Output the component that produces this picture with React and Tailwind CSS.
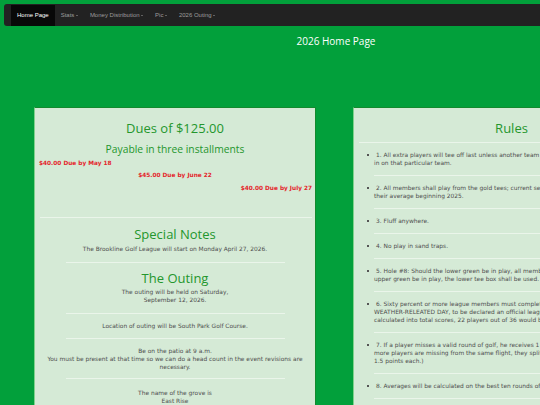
import React from "react";

const heading = { fontFamily: '"Comic Sans MS", "Open Sans", sans-serif' };
const body = { fontFamily: '"DejaVu Sans", Verdana, sans-serif' };

const navItems = [
  { label: "Home Page", active: true },
  { label: "Stats", caret: true },
  { label: "Money Distribution", caret: true },
  { label: "Pic", caret: true },
  { label: "2026 Outing", caret: true },
];

const rules = [
  [
    "1. All extra players will tee off last unless another team member is absent, then they will fill",
    "in on that particular team.",
  ],
  [
    "2. All members shall play from the gold tees; current seniors may play from the silver tees with",
    "their average beginning 2025.",
  ],
  ["3. Fluff anywhere."],
  ["4. No play in sand traps."],
  [
    "5. Hole #8: Should the lower green be in play, all members will tee off from the upper tee box. Should the",
    "upper green be in play, the lower tee box shall be used.",
  ],
  [
    "6. Sixty percent or more league members must complete their round on a",
    "WEATHER-RELEATED DAY, to be declared an official league round. (Example: to be",
    "calculated into total scores, 22 players out of 36 would be since 60%.)",
  ],
  [
    "7. If a player misses a valid round of golf, he receives 1 point. (If two or",
    "more players are missing from the same flight, they split points, e.g. 3 points,",
    "1.5 points each.)",
  ],
  ["8. Averages will be calculated on the best ten rounds of your season."],
];

function Line({ children, className = "" }) {
  return <div className={`h-[8px] leading-[8px] whitespace-nowrap ${className}`}>{children}</div>;
}

function Divider({ className = "" }) {
  return <div className={`h-px bg-[#eaf5ea] ${className}`} />;
}

export default function App() {
  return (
    <div className="w-[540px] h-[405px] overflow-hidden bg-[#02a03b]">
      <div className="w-[672px]">
        {/* navbar */}
        <div
          className="ml-[4px] mt-[4px] w-[664px] h-[22px] bg-[#222222] rounded-[3px] flex pl-[7px]"
          style={{ fontFamily: '"Liberation Sans", Arial, sans-serif' }}
        >
          {navItems.map((item) => (
            <div
              key={item.label}
              className={`flex items-center px-[6px] text-[6px] ${
                item.active ? "bg-[#080808] text-white mt-px" : "text-[#9d9d9d]"
              }`}
            >
              {item.label}
              {item.caret && (
                <span className="ml-[1.5px] w-0 h-0 border-l-[1.5px] border-r-[1.5px] border-t-[1.5px] border-l-transparent border-r-transparent border-t-[#9d9d9d]" />
              )}
            </div>
          ))}
        </div>

        <div className="mt-[8px] h-[14px] leading-[14px] text-center text-white text-[10px]" style={heading}>
          2026 Home Page
        </div>

        <div className="mt-[59px] flex pl-[34px] gap-[37px] items-start">
          {/* left card */}
          <div
            className="w-[282px] h-[320px] bg-[#d5ead6] border-t border-r border-t-[#138a2e] border-r-[#138a2e] border-l border-l-[#7fd18c] text-[#4e4e4e]"
            style={body}
          >
            <div className="mt-[11px] h-[18px] leading-[18px] text-center text-[13px] text-[#24962d]" style={heading}>
              Dues of $125.00
            </div>
            <div className="mt-[5px] h-[14px] leading-[14px] text-center text-[10.3px] text-[#24962d]" style={heading}>
              Payable in three installments
            </div>
            <Line className="mt-[3px] pl-[4px] text-[5.8px] font-bold text-[#e4252b]">$40.00 Due by May 18</Line>
            <Line className="mt-[4px] text-center text-[5.8px] font-bold text-[#e4252b]">$45.00 Due by June 22</Line>
            <Line className="mt-[5px] pr-[3px] text-right text-[5.8px] font-bold text-[#e4252b]">$40.00 Due by July 27</Line>

            <Divider className="mt-[25px] ml-[5px] mr-[3px]" />

            <div className="mt-[7px] h-[18px] leading-[18px] text-center text-[13px] text-[#24962d]" style={heading}>
              Special Notes
            </div>
            <Line className="mt-[2px] text-center text-[5.9px]">
              The Brookline Golf League will start on Monday April 27, 2026.
            </Line>

            <Divider className="mt-[9px] ml-[31px] mr-[30px]" />

            <div className="mt-[6px] h-[18px] leading-[18px] text-center text-[13px] text-[#24962d]" style={heading}>
              The Outing
            </div>
            <div className="mt-px text-center text-[5.9px]">
              <Line>The outing will be held on Saturday,</Line>
              <Line>September 12, 2026.</Line>
            </div>

            <Divider className="mt-[9px] ml-[31px] mr-[30px]" />

            <Line className="mt-[8px] text-center text-[5.9px]">Location of outing will be South Park Golf Course.</Line>

            <Divider className="mt-[8px] ml-[31px] mr-[30px]" />

            <div className="mt-[8px] text-center text-[5.9px]">
              <Line>Be on the patio at 9 a.m.</Line>
              <Line>You must be present at that time so we can do a head count in the event revisions are</Line>
              <Line>necessary.</Line>
            </div>

            <Divider className="mt-[7px] ml-[31px] mr-[30px]" />

            <div className="mt-[10px] text-center text-[5.9px]">
              <Line>The name of the grove is</Line>
              <Line>East Rise</Line>
            </div>
          </div>

          {/* right card */}
          <div
            className="w-[316px] h-[320px] bg-[#d5ead6] border-t border-t-[#138a2e] border-l border-l-[#7fd18c] text-[#4e4e4e] overflow-hidden"
            style={body}
          >
            <div className="mt-[11px] h-[18px] leading-[18px] text-center text-[13px] text-[#24962d]" style={heading}>
              Rules
            </div>
            <Divider className="mt-[5px] ml-[5px]" />
            <ul className="ml-[20px] text-[5.9px]">
              {rules.map((lines, i) => (
                <li key={i} className="relative pt-[8px]">
                  <span className="absolute left-[-7px] top-[11px] w-[2px] h-[2px] bg-[#555555]" />
                  {lines.map((l, j) => (
                    <Line key={j} className={j === 0 ? "pl-[2px]" : ""}>
                      {l}
                    </Line>
                  ))}
                  <Divider className="mt-[8px]" />
                </li>
              ))}
            </ul>
          </div>
        </div>
      </div>
    </div>
  );
}
